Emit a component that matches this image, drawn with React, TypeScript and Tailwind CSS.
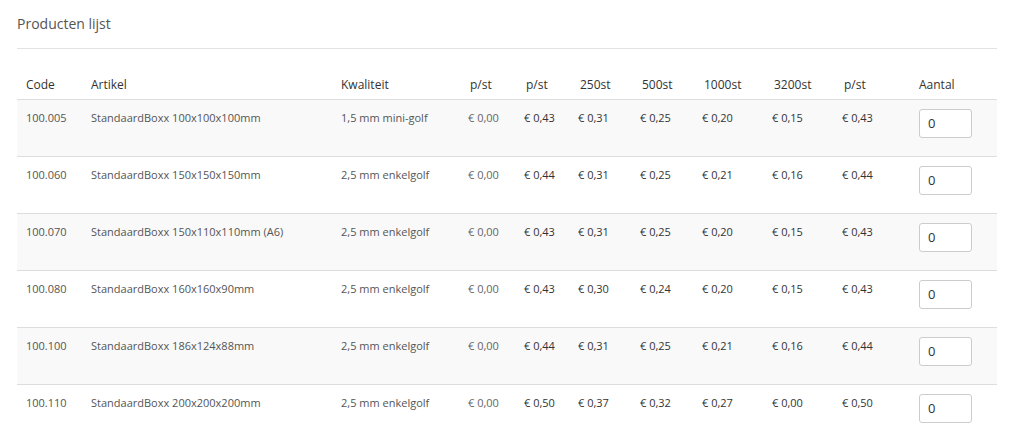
import React from "react";

const rows = [
  ["100.005", "StandaardBoxx 100x100x100mm", "1,5 mm mini-golf", "€ 0,00", "€ 0,43", "€ 0,31", "€ 0,25", "€ 0,20", "€ 0,15", "€ 0,43"],
  ["100.060", "StandaardBoxx 150x150x150mm", "2,5 mm enkelgolf", "€ 0,00", "€ 0,44", "€ 0,31", "€ 0,25", "€ 0,21", "€ 0,16", "€ 0,44"],
  ["100.070", "StandaardBoxx 150x110x110mm (A6)", "2,5 mm enkelgolf", "€ 0,00", "€ 0,43", "€ 0,31", "€ 0,25", "€ 0,20", "€ 0,15", "€ 0,43"],
  ["100.080", "StandaardBoxx 160x160x90mm", "2,5 mm enkelgolf", "€ 0,00", "€ 0,43", "€ 0,30", "€ 0,24", "€ 0,20", "€ 0,15", "€ 0,43"],
  ["100.100", "StandaardBoxx 186x124x88mm", "2,5 mm enkelgolf", "€ 0,00", "€ 0,44", "€ 0,31", "€ 0,25", "€ 0,21", "€ 0,16", "€ 0,44"],
  ["100.110", "StandaardBoxx 200x200x200mm", "2,5 mm enkelgolf", "€ 0,00", "€ 0,50", "€ 0,37", "€ 0,32", "€ 0,27", "€ 0,00", "€ 0,50"],
];

const widths = [65, 250, 127, 56, 54, 62, 62, 70, 70, 77, 87];
const headers = ["Code", "Artikel", "Kwaliteit", "p/st", "p/st", "250st", "500st", "1000st", "3200st", "p/st", "Aantal"];

export default function App() {
  return (
    <div
      className="w-[1011px] h-[433px] overflow-hidden bg-white pl-[17px] pr-[14px]"
      style={{ fontFamily: '"Open Sans", "Liberation Sans", sans-serif' }}
    >
      <div className="pt-[14px] h-[48px] text-[14px] leading-[20px] text-[#555]">Producten lijst</div>
      <div className="h-px bg-[#e3e3e3]" />
      <table className="mt-[18px] w-[980px] border-collapse table-fixed">
        <colgroup>
          {widths.map((w, i) => (
            <col key={i} style={{ width: w }} />
          ))}
        </colgroup>
        <thead>
          <tr className="h-[32px] border-b border-[#dddddd]">
            {headers.map((h, i) => (
              <th
                key={i}
                className={`text-left font-normal text-[12px] leading-[17px] text-[#333] align-bottom pb-[6px] ${
                  i >= 3 && i <= 9 ? "pl-[11px]" : "pl-[9px]"
                }`}
              >
                {h}
              </th>
            ))}
          </tr>
        </thead>
        <tbody>
          {rows.map((r, ri) => (
            <tr
              key={ri}
              className={`h-[57px] border-b border-[#dddddd] ${ri % 2 === 0 ? "bg-[#f9f9f9]" : "bg-white"}`}
            >
              {r.map((c, ci) => (
                <td
                  key={ci}
                  className={`align-top pt-[10px] pl-[9px] text-[11px] leading-[16px] whitespace-nowrap ${
                    ci === 3 ? "text-[#666]" : ci >= 4 ? "text-[#333]" : "text-[#555]"
                  }`}
                >
                  {c}
                </td>
              ))}
              <td className="align-top pt-[9px] pl-[9px]">
                <input
                  readOnly
                  value="0"
                  className="w-[53px] h-[29px] border border-[#cccccc] rounded-[3px] bg-white px-[8px] text-[13px] text-[#333] outline-none"
                  style={{ fontFamily: '"Open Sans", "Liberation Sans", sans-serif' }}
                />
              </td>
            </tr>
          ))}
        </tbody>
      </table>
    </div>
  );
}
